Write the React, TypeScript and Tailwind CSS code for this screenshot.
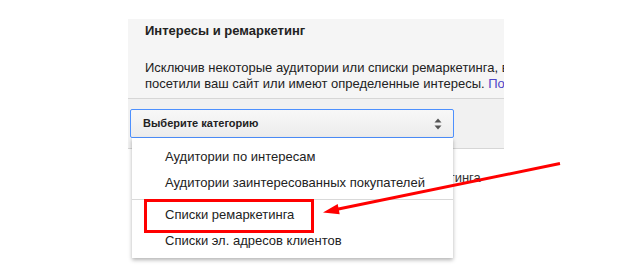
import React from "react";

export default function App() {
  return (
    <div
      className="relative w-[622px] h-[272px] bg-white overflow-hidden text-[#222]"
      style={{ fontFamily: '"Liberation Sans", Arial, sans-serif' }}
    >
      <div className="ml-[128px] mt-[19px] w-[376px]">
        <div className="h-[80px] bg-[#f5f5f5] border-b border-[#d6d6d6] pl-[17px] pt-[4px] overflow-hidden">
          <div className="text-[13px] leading-[16px] font-bold text-[#222]">Интересы и ремаркетинг</div>
          <div className="mt-[21px] text-[13px] leading-[16px] whitespace-nowrap">
            <div>Исключив некоторые аудитории или списки ремаркетинга, вы сможете не показывать</div>
            <div>
              посетили ваш сайт или имеют определенные интересы.{" "}
              <span className="text-[#4f46c8]">Подробнее</span>
            </div>
          </div>
        </div>
        <div className="h-[50px] bg-[#f1f1f1] border-b border-[#d6d6d6] pt-[10px] pl-[2px]">
          <div className="flex items-center justify-between w-[324px] h-[29px] rounded-[2px] border border-[#4d90fe] bg-gradient-to-b from-[#f8f8f8] to-[#ececec] pl-[12px] pr-[11px]">
            <span className="text-[11px] font-bold text-[#222]">Выберите категорию</span>
            <svg width="8" height="12" viewBox="0 0 8 12">
              <polygon points="4,0.5 7.5,4.5 0.5,4.5" fill="#555" />
              <polygon points="0.5,7.5 7.5,7.5 4,11.5" fill="#555" />
            </svg>
          </div>
        </div>
        <div className="pl-[17px] mt-[21px] text-[13px] leading-[16px] whitespace-nowrap text-[#333]">
          Нет исключенных аудиторий или списков ремаркетинга
        </div>
      </div>

      <div className="absolute left-[132px] top-[138px] w-[321px] bg-white shadow-[0_2px_4px_rgba(0,0,0,0.3)] pt-[6px] pb-[4px] text-[13px] text-[#222]">
        <div className="h-[26px] flex items-center pl-[33px]">Аудитории по интересам</div>
        <div className="h-[26px] flex items-center pl-[33px]">Аудитории заинтересованных покупателей</div>
        <div className="mt-[3px] h-px bg-[#d9d9d9]" />
        <div className="mt-[2px] h-[26px] flex items-center pl-[33px]">Списки ремаркетинга</div>
        <div className="h-[26px] flex items-center pl-[33px]">Списки эл. адресов клиентов</div>
      </div>

      <div className="absolute left-[144px] top-[199px] w-[170px] h-[34px] border-[3px] border-[#f00]" />

      <svg className="absolute left-0 top-0" width="622" height="272" viewBox="0 0 622 272">
        <line x1="560" y1="163.5" x2="336" y2="209.5" stroke="#f00" strokeWidth="3" />
        <polygon points="323,212.5 339.7,214.2 337.7,203.9" fill="#f00" />
      </svg>
    </div>
  );
}
